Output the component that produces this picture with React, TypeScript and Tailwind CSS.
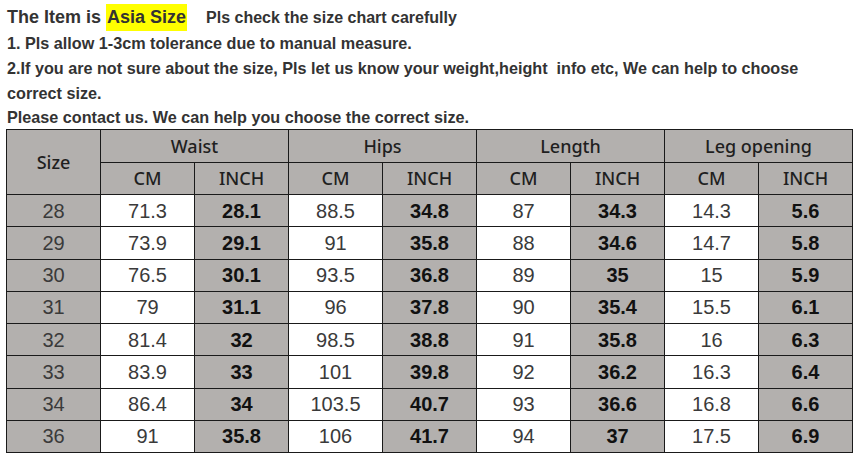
const rows = [
  ["28", "71.3", "28.1", "88.5", "34.8", "87", "34.3", "14.3", "5.6"],
  ["29", "73.9", "29.1", "91", "35.8", "88", "34.6", "14.7", "5.8"],
  ["30", "76.5", "30.1", "93.5", "36.8", "89", "35", "15", "5.9"],
  ["31", "79", "31.1", "96", "37.8", "90", "35.4", "15.5", "6.1"],
  ["32", "81.4", "32", "98.5", "38.8", "91", "35.8", "16", "6.3"],
  ["33", "83.9", "33", "101", "39.8", "92", "36.2", "16.3", "6.4"],
  ["34", "86.4", "34", "103.5", "40.7", "93", "36.6", "16.8", "6.6"],
  ["36", "91", "35.8", "106", "41.7", "94", "37", "17.5", "6.9"],
]

const groups = ["Waist", "Hips", "Length", "Leg opening"]

const cell = "border border-[#1a1a1a] text-center p-0"
const head = cell + " font-['Noto_Sans',sans-serif] font-medium"

export default function App() {
  return (
    <div className="w-[858px] h-[454px] bg-white font-['Liberation_Sans',Arial,sans-serif] overflow-hidden">
      <div className="pl-[7px] pt-[5px] text-[#333] font-bold">
        <div className="h-[25px] flex items-center">
          <span className="text-[18px]">The Item is&nbsp;</span>
          <span className="text-[18px] bg-[#ffff00] px-[1px]">Asia Size</span>
          <span className="text-[16px] ml-[19px]">Pls check the size chart carefully</span>
        </div>
        <div className="text-[16.2px] leading-[27px] h-[25px]">1. Pls allow 1-3cm tolerance due to manual measure.</div>
        <div className="text-[16.2px] leading-[27px] h-[25px]">
          2.If you are not sure about the size, Pls let us know your weight,height&nbsp; info etc, We can help to choose
        </div>
        <div className="text-[16.2px] leading-[27px] h-[24px]">correct size.</div>
        <div className="text-[16.2px] leading-[27px] h-[25px]">Please contact us. We can help you choose the correct size.</div>
      </div>
      <table className="ml-[6px] border-collapse w-[847px] table-fixed border-[1.5px] border-[#1a1a1a]">
        <tbody>
          <tr className="h-[33px] bg-[#b3b0ae] text-[18px] text-[#1f1f1f]">
            <td rowSpan={2} className={head}>Size</td>
            {groups.map((g) => (
              <td key={g} colSpan={2} className={head}>{g}</td>
            ))}
          </tr>
          <tr className="h-[32px] bg-[#b3b0ae] text-[18px] text-[#1f1f1f]">
            {groups.flatMap((g) => [
              <td key={g + "cm"} className={head}>CM</td>,
              <td key={g + "in"} className={head}>INCH</td>,
            ])}
          </tr>
          {rows.map((r) => (
            <tr key={r[0]} className="h-[32.25px] text-[20px]">
              {r.map((v, i) => (
                <td
                  key={i}
                  className={
                    cell +
                    (i === 0
                      ? " bg-[#b3b0ae] text-[#3a3a3a]"
                      : i % 2 === 1
                      ? " bg-white text-[#3a3a3a]"
                      : " bg-[#b3b0ae] text-[#111] font-bold")
                  }
                >
                  {v}
                </td>
              ))}
            </tr>
          ))}
        </tbody>
      </table>
    </div>
  )
}
